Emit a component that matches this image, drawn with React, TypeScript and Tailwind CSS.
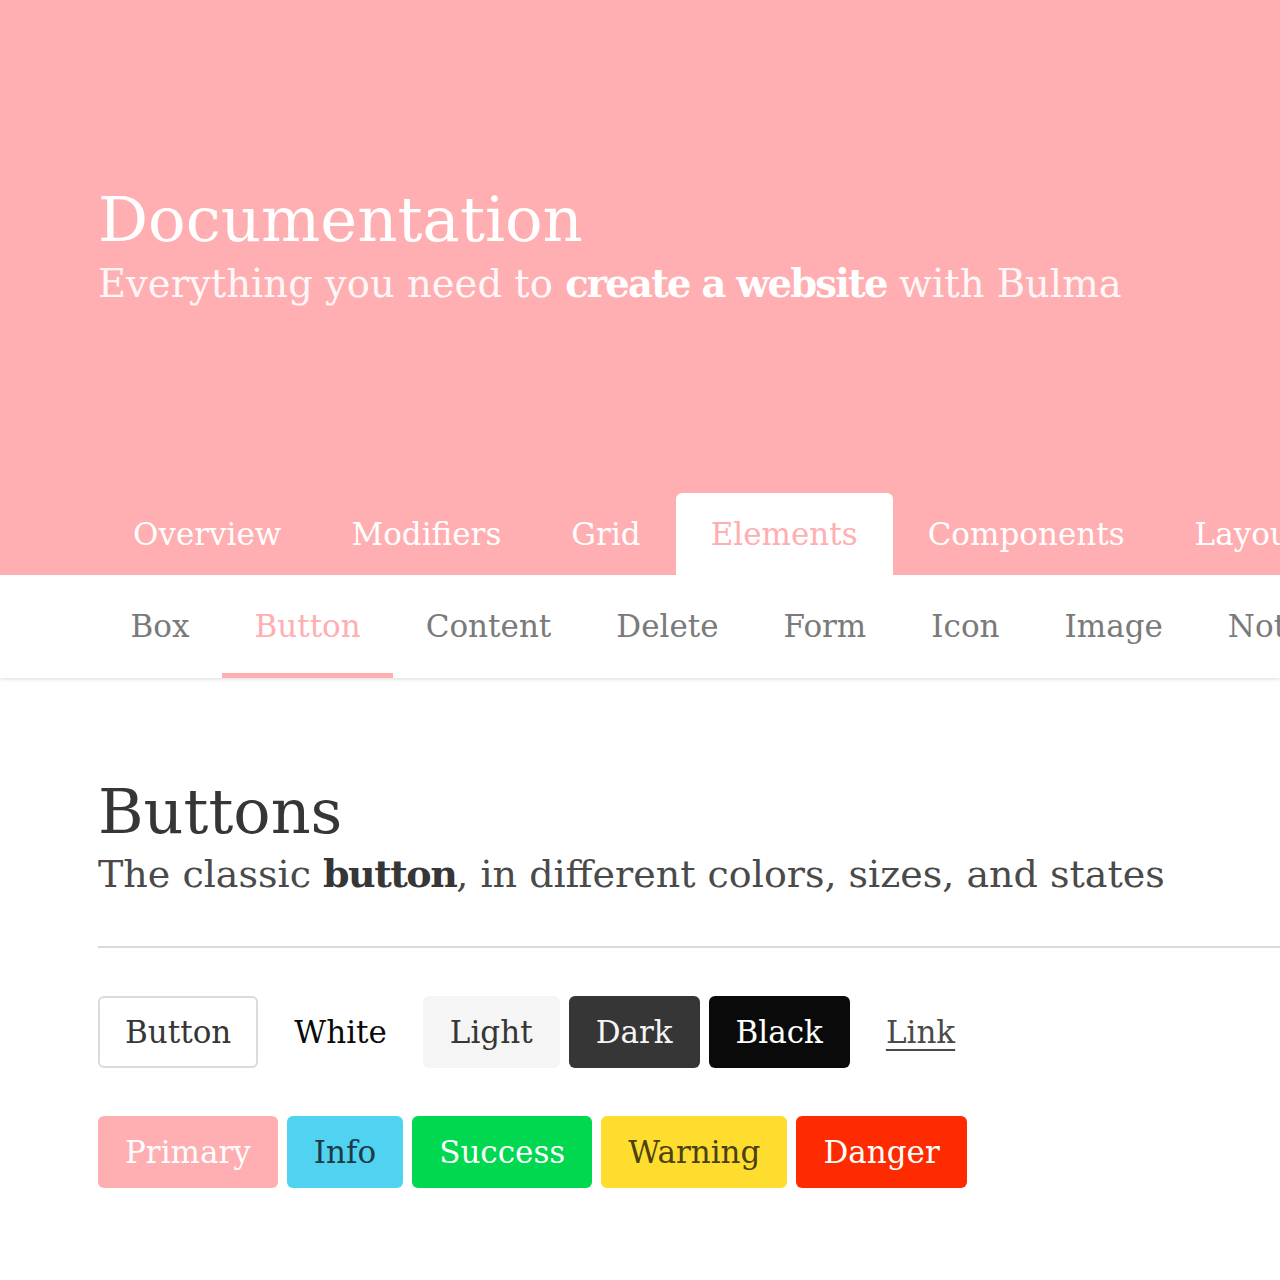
import React from "react";

const serif = { fontFamily: '"DejaVu Serif", "Liberation Serif", serif' };

const tabs = ["Overview", "Modifiers", "Grid", "Elements", "Components", "Layout"];
const sub = ["Box", "Button", "Content", "Delete", "Form", "Icon", "Image", "Notification"];

const btn = "h-[72px] px-[25px] flex items-center rounded-[6px] border-2 ";

export default function App() {
  return (
    <div className="w-[1280px] h-[1280px] overflow-hidden bg-white" style={serif}>
      <header className="bg-[#ffaeb1] h-[575px] flex flex-col">
        <div className="flex-1 flex flex-col justify-center pl-[98px] pt-[2px]">
          <h1 className="text-[62.5px] leading-[72px] text-white font-light">Documentation</h1>
          <p className="text-[38.5px] leading-[56px] text-white/90">
            Everything you need to{" "}
            <strong className="font-bold text-white tracking-[-1.8px]">create a website</strong> with Bulma
          </p>
        </div>
        <nav className="flex pl-[98px] h-[82px] items-end whitespace-nowrap">
          {tabs.map((t) => (
            <div
              key={t}
              className={
                "h-[82px] px-[35px] flex items-center text-[31px] rounded-t-[6px] shrink-0 " +
                (t === "Elements" ? "bg-white text-[#ffaeb1]" : "text-white")
              }
            >
              {t}
            </div>
          ))}
        </nav>
      </header>
      <nav className="h-[103px] flex pl-[98px] whitespace-nowrap shadow-[0_2px_3px_rgba(0,0,0,0.1)] relative">
        {sub.map((s) => (
          <div
            key={s}
            className={
              "px-[32.5px] flex items-center text-[31px] shrink-0 border-b-[5px] pt-[5px] " +
              (s === "Button" ? "text-[#ffaeb1] border-[#ffaeb1]" : "text-[#7a7a7a] border-transparent")
            }
          >
            {s}
          </div>
        ))}
      </nav>
      <main className="pl-[98px] pt-[98px]">
        <h2 className="text-[62px] leading-[72px] text-[#363636]">Buttons</h2>
        <p className="text-[38px] leading-[52px] text-[#4a4a4a]">
          The classic <strong className="font-bold text-[#363636] tracking-[-1.5px]">button</strong>, in different colors, sizes, and states
        </p>
        <hr className="mt-[46px] border-t-[2px] border-[#dbdbdb]" />
        <div className="flex gap-[9px] mt-[48px] text-[31px]">
          <div className={btn + "border-[#dbdbdb] text-[#363636]"}>Button</div>
          <div className={btn + "border-transparent text-[#0a0a0a] bg-white"}>White</div>
          <div className={btn + "border-transparent text-[#363636] bg-[#f5f5f5]"}>Light</div>
          <div className={btn + "border-transparent text-[#f5f5f5] bg-[#363636]"}>Dark</div>
          <div className={btn + "border-transparent text-white bg-[#0a0a0a]"}>Black</div>
          <div className={btn + "border-transparent text-[#4a4a4a] underline decoration-2 underline-offset-[6px]"}>Link</div>
        </div>
        <div className="flex gap-[9px] mt-[48px] text-[31px]">
          <div className={btn + "border-transparent text-white bg-[#ffaeb1]"}>Primary</div>
          <div className={btn + "border-transparent text-[#1f3a44] bg-[#4fd3f0]"}>Info</div>
          <div className={btn + "border-transparent text-white bg-[#00d84f]"}>Success</div>
          <div className={btn + "border-transparent text-[#4a4114] bg-[#ffdd2f]"}>Warning</div>
          <div className={btn + "border-transparent text-white bg-[#ff2b00]"}>Danger</div>
        </div>
      </main>
    </div>
  );
}
